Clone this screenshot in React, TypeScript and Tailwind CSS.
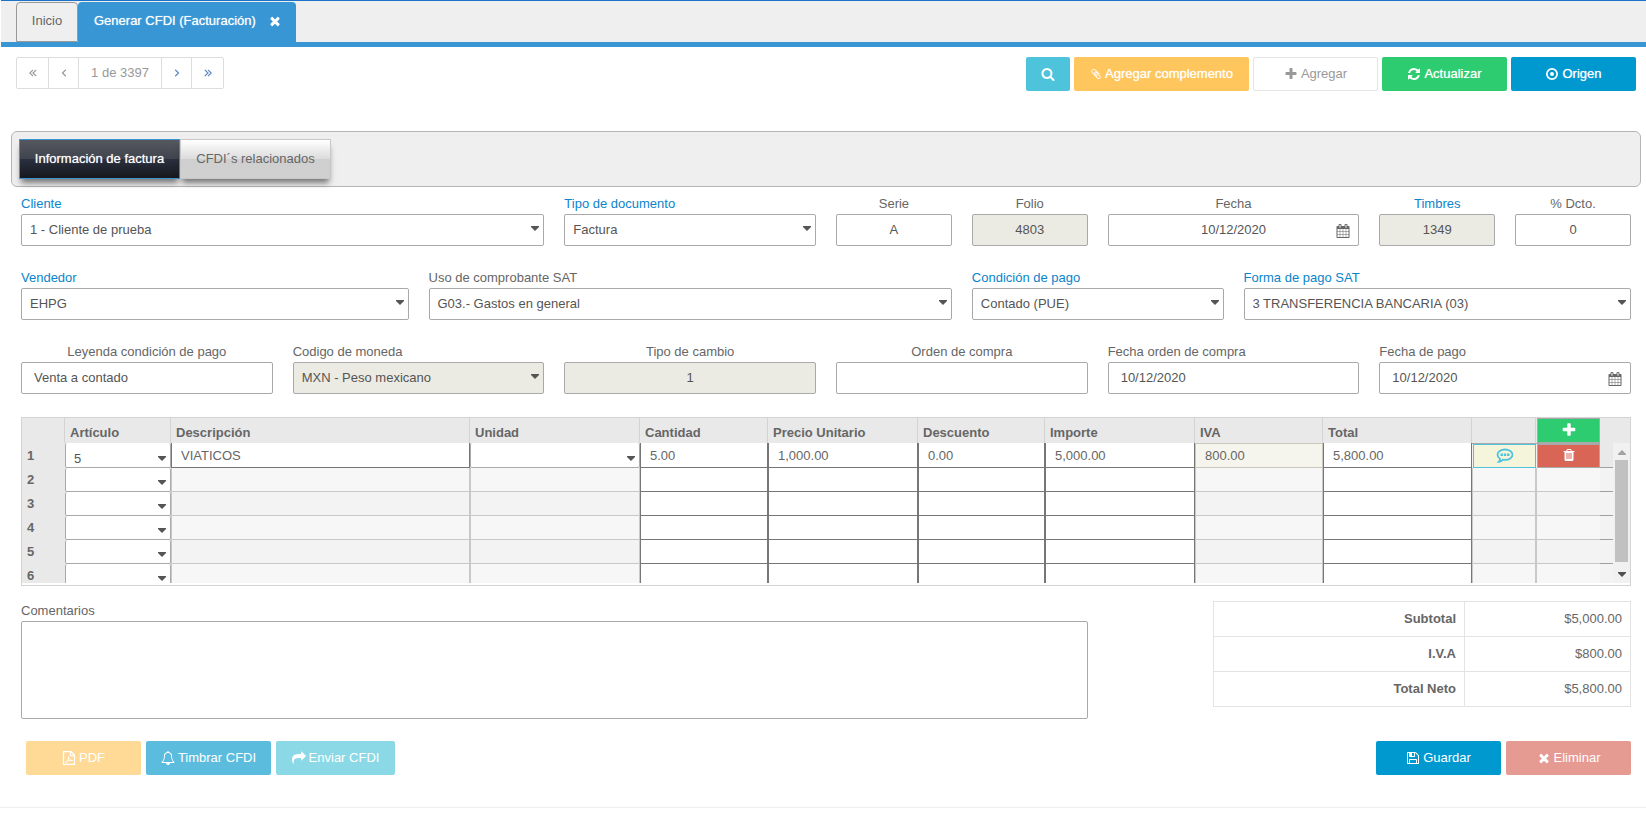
import React from "react"
import clsx from "clsx"

const icons = {
  times:
    "M1490 1322q0 40-28 68l-136 136q-28 28-68 28t-68-28l-294-294-294 294q-28 28-68 28t-68-28l-136-136q-28-28-28-68t28-68l294-294-294-294q-28-28-28-68t28-68l136-136q28-28 68-28t68 28l294 294 294-294q28-28 68-28t68 28l136 136q28 28 28 68t-28 68l-294 294 294 294q28 28 28 68z",
  search:
    "M1216 832q0-185-131.500-316.500t-316.500-131.500-316.500 131.500-131.500 316.500 131.500 316.500 316.500 131.500 316.500-131.500 131.500-316.500zm512 832q0 52-38 90t-90 38q-54 0-90-38l-343-342q-179 124-399 124-143 0-273.500-55.500t-225-150-150-225-55.500-273.500 55.500-273.500 150-225 225-150 273.500-55.500 273.500 55.500 225 150 150 225 55.500 273.500q0 220-124 399l343 343q37 37 37 90z",
  paperclip:
    "M1596 1385q0 117-79 196t-196 79q-135 0-235-100l-777-776q-113-115-113-271 0-159 110-270t269-111q158 0 273 113l605 606q10 10 10 22 0 16-30.500 46.500t-46.500 30.500q-13 0-23-10l-606-607q-79-77-181-77-106 0-179 75t-73 181q0 105 76 181l776 777q63 63 145 63 64 0 106-42t42-106q0-82-63-145l-581-581q-26-24-60-24-29 0-48 19t-19 48q0 32 25 59l410 410q10 10 10 22 0 16-31 47t-47 31q-12 0-22-10l-410-410q-63-61-63-149 0-82 57-139t139-57q88 0 149 63l581 581q100 98 100 235z",
  plus: "M1600 736v192q0 40-28 68t-68 28h-416v416q0 40-28 68t-68 28h-192q-40 0-68-28t-28-68v-416h-416q-40 0-68-28t-28-68v-192q0-40 28-68t68-28h416v-416q0-40 28-68t68-28h192q40 0 68 28t28 68v416h416q40 0 68 28t28 68z",
  refresh:
    "M1639 1056q0 5-1 7-64 268-268 434.500t-478 166.500q-146 0-282.500-55t-243.500-157l-129 129q-19 19-45 19t-45-19-19-45v-448q0-26 19-45t45-19h448q26 0 45 19t19 45-19 45l-137 137q71 66 161 102t187 36q134 0 250-65t186-179q11-17 53-117 8-23 30-23h192q13 0 22.500 9.500t9.500 22.500zm25-800v448q0 26-19 45t-45 19h-448q-26 0-45-19t-19-45 19-45l138-138q-148-137-349-137-134 0-250 65t-186 179q-11 17-53 117-8 23-30 23h-199q-13 0-22.500-9.500t-9.500-22.500v-7q65-268 270-434.500t480-166.500q146 0 284 55.500t245 156.500l130-129q19-19 45-19t45 19 19 45z",
  target:
    "M896 128a768 768 0 1 0 0 1536a768 768 0 1 0 0-1536zm0 224a544 544 0 1 1 0 1088a544 544 0 1 1 0-1088zm0 288a256 256 0 1 0 0 512a256 256 0 1 0 0-512z",
  calendar:
    "M192 1664h288v-288h-288v288zm352 0h320v-288h-320v288zm-352-352h288v-320h-288v320zm352 0h320v-320h-320v320zm-352-384h288v-288h-288v288zm736 736h320v-288h-320v288zm-384-736h320v-288h-320v288zm768 736h288v-288h-288v288zm-384-352h320v-320h-320v320zm-352-864v-288q0-13-9.500-22.500t-22.500-9.500h-64q-13 0-22.500 9.500t-9.500 22.500v288q0 13 9.500 22.500t22.500 9.500h64q13 0 22.500-9.500t9.500-22.500zm736 864h288v-320h-288v320zm-384-384h320v-288h-320v288zm384 0h288v-288h-288v288zm32-480v-288q0-13-9.500-22.500t-22.500-9.500h-64q-13 0-22.500 9.500t-9.500 22.500v288q0 13 9.500 22.500t22.500 9.500h64q13 0 22.500-9.500t9.500-22.500zm384-64v1280q0 52-38 90t-90 38h-1408q-52 0-90-38t-38-90v-1280q0-52 38-90t90-38h128v-96q0-66 47-113t113-47h64q66 0 113 47t47 113v96h384v-96q0-66 47-113t113-47h64q66 0 113 47t47 113v96h128q52 0 90 38t38 90z",
  trash:
    "M704 1376v-704q0-14-9-23t-23-9h-64q-14 0-23 9t-9 23v704q0 14 9 23t23 9h64q14 0 23-9t9-23zm256 0v-704q0-14-9-23t-23-9h-64q-14 0-23 9t-9 23v704q0 14 9 23t23 9h64q14 0 23-9t9-23zm256 0v-704q0-14-9-23t-23-9h-64q-14 0-23 9t-9 23v704q0 14 9 23t23 9h64q14 0 23-9t9-23zm-544-992h448l-48-117q-7-9-17-11h-317q-10 2-17 11zm928 32v64q0 14-9 23t-23 9h-96v948q0 83-47 143.500t-113 60.500h-832q-66 0-113-58.500t-47-141.500v-952h-96q-14 0-23-9t-9-23v-64q0-14 9-23t23-9h309l70-167q15-37 54-63t79-26h320q40 0 79 26t54 63l70 167h309q14 0 23 9t9 23z",
  save: "M512 1536h768v-384h-768v384zm896 0h128v-896q0-14-10-38.500t-20-34.500l-281-281q-10-10-34-20t-39-10v416q0 40-28 68t-68 28h-576q-40 0-68-28t-28-68v-416h-128v1280h128v-416q0-40 28-68t68-28h832q40 0 68 28t28 68v416zm-384-928v-320q0-13-9.500-22.500t-22.500-9.500h-192q-13 0-22.500 9.500t-9.500 22.500v320q0 13 9.500 22.500t22.500 9.500h192q13 0 22.500-9.500t9.500-22.500zm640 32v928q0 40-28 68t-68 28h-1344q-40 0-68-28t-28-68v-1344q0-40 28-68t68-28h928q40 0 88 20t76 48l280 280q28 28 48 76t20 88z",
  share:
    "M1792 640q0 26-19 45l-512 512q-19 19-45 19t-45-19-19-45v-256h-224q-98 0-175.500 6t-154 21.500-133 42.500-105.500 69.500-80 101-48.500 138.500-17.500 181q0 55 5 123 0 6 2.500 23.500t2.500 26.500q0 15-8.500 25t-23.500 10q-16 0-28-17-7-9-13-22t-13.500-30-10.500-24q-127-285-127-451 0-199 53-333 162-403 875-403h224v-256q0-26 19-45t45-19 45 19l512 512q19 19 19 45z",
  bell: "M912 1696q0-16-16-16-59 0-101.500-42.500t-42.500-101.500q0-16-16-16t-16 16q0 73 51.500 124.500t124.500 51.500q16 0 16-16zm-666-288h1300q-266-300-266-832 0-51-24-105t-69-103-121.500-80.500-169.500-31.500-169.500 31.500-121.500 80.500-69 103-24 105q0 532-266 832zm1482 0q0 52-38 90t-90 38h-448q0 106-75 181t-181 75-181-75-75-181h-448q-52 0-90-38t-38-90q50-42 91-88t85-119.500 74.500-158.500 50-206 19.500-260q0-152 117-282.500t307-158.500q-8-19-8-39 0-40 28-68t68-28 68 28 28 68q0 20-8 39 190 28 307 158.500t117 282.500q0 139 19.500 260t50 206 74.500 158.500 85 119.500 91 88z",
}

interface IconProps {
  name: keyof typeof icons
  className?: string
}

function Icon({ name, className = "size-[14px]" }: IconProps) {
  return (
    <svg viewBox="0 0 1792 1792" className={clsx("shrink-0", className)} fill="currentColor" fillRule={name === "target" ? "evenodd" : "nonzero"} aria-hidden="true">
      <path d={icons[name]} />
    </svg>
  )
}

function PdfIcon() {
  return (
    <svg viewBox="0 0 14 14" className="size-[14px] shrink-0" fill="none" stroke="currentColor" strokeWidth="1.300" aria-hidden="true">
      <path d="M1.500.6h7.500l3.500 3.500v9.300h-11z M8.500.6v4h4" />
      <path d="M3.500 11.500c1.500-.5 3.500-4 3.200-6.200c-.8 1.500 1.300 4.200 3.800 4.200c-1.500-.8-4 .2-7 2z" strokeWidth="1" />
    </svg>
  )
}

function CommentIcon() {
  return (
    <svg viewBox="0 0 18 16" className="h-4 w-[18px]" fill="none" stroke="currentColor" aria-hidden="true">
      <path d="M9 1.500c4.200 0 7.500 2.200 7.500 5.200s-3.300 5.200-7.500 5.200q-1 0-2-.2q-1.800 1.900-4.200 2.100q1.100-1.200 1.200-3.100q-2.500-1.500-2.500-4c0-3 3.300-5.200 7.500-5.200z" strokeWidth="1.800" />
      <path d="M4.500 6.700h2.400M7.800 6.700h2.400M11.100 6.700h2.400" strokeWidth="2.400" />
    </svg>
  )
}

function Chevron({ left, double }: { left?: boolean; double?: boolean }) {
  return (
    <svg viewBox="0 0 8 8" className={clsx("size-2", left && "rotate-180")} fill="none" stroke="currentColor" strokeWidth="1.200" aria-hidden="true">
      {double ? <path d="M.8.8L4 4L.8 7.200M4 .8L7.200 4L4 7.200" /> : <path d="M2.200.8L5.500 4L2.200 7.200" />}
    </svg>
  )
}

function Caret({ className, up }: { className?: string; up?: boolean }) {
  return (
    <svg viewBox="0 0 8 5" className={clsx("h-[5px] w-2", up && "rotate-180", className)} fill="currentColor" aria-hidden="true">
      <path d="M0 0h8v1L4 5L0 1z" />
    </svg>
  )
}

interface FieldProps {
  id: string
  label: string
  value?: string
  span: string
  type?: "select" | "date" | "text"
  blue?: boolean
  centerLabel?: boolean
  center?: boolean
  disabled?: boolean
}

function Field({ id, label, value = "", span, type = "text", blue, centerLabel, center, disabled }: FieldProps) {
  const box = clsx("h-8 w-full rounded-xs border border-[#a9a9a9] text-[#555]", disabled ? "bg-[#ebebe4]" : "bg-white")
  return (
    <div className={span}>
      <label htmlFor={id} className={clsx("block h-5 leading-5", blue && "text-[#0a84cb]", centerLabel && "text-center")}>
        {label}
      </label>
      <div className="relative">
        {type === "select" ? (
          <>
            <select id={id} disabled={disabled} className={clsx(box, "appearance-none pr-6 pl-2 opacity-100")}>
              <option>{value}</option>
            </select>
            <Caret className="pointer-events-none absolute top-3 right-[5px] text-[#555]" />
          </>
        ) : (
          <input id={id} type="text" defaultValue={value} disabled={disabled} className={clsx(box, "px-3 pb-0.5", center && "text-center")} />
        )}
        {type === "date" && <Icon name="calendar" className="pointer-events-none absolute top-[10px] right-[9px] size-[14px]" />}
      </div>
    </div>
  )
}

interface ButtonProps {
  children: React.ReactNode
  className: string
}

function Button({ children, className }: ButtonProps) {
  return (
    <button type="button" className={clsx("flex h-[34px] items-center justify-center gap-[3px] rounded-xs", className)}>
      {children}
    </button>
  )
}

const columns = [
  { name: "", width: "w-[43px]" },
  { name: "Artículo", width: "w-[106px]" },
  { name: "Descripción", width: "" },
  { name: "Unidad", width: "w-[170px]" },
  { name: "Cantidad", width: "w-[128px]" },
  { name: "Precio Unitario", width: "w-[150px]" },
  { name: "Descuento", width: "w-[127px]" },
  { name: "Importe", width: "w-[150px]" },
  { name: "IVA", width: "w-[128px]" },
  { name: "Total", width: "w-[149px]" },
]

const rows = [
  { articulo: "5", descripcion: "VIATICOS", cantidad: "5.00", precio: "1,000.00", descuento: "0.00", importe: "5,000.00", iva: "800.00", total: "5,800.00" },
  {},
  {},
  {},
  {},
  {},
] as Record<string, string>[]

function CellSelect({ label, value, row }: { label: string; value?: string; row: number }) {
  return (
    <td className="p-0">
      <div className="relative">
        <select
          aria-label={`${label} ${row}`}
          className={clsx("block w-full appearance-none rounded-xs border border-t-0 border-[#a9a9a9] bg-white pt-1.5 pl-2 text-[#555]", row === 1 ? "h-[25px] border-t" : "h-6")}
        >
          <option>{value}</option>
        </select>
        <Caret className="pointer-events-none absolute right-[5px] bottom-[7px] text-[#555]" />
      </div>
    </td>
  )
}

function CellInput({ label, value, row }: { label: string; value?: string; row: number }) {
  return (
    <td className="p-0">
      <input
        type="text"
        aria-label={`${label} ${row}`}
        defaultValue={value}
        className={clsx("block w-full border border-t-0 border-[#767676] bg-white px-[9px] text-[#666]", row === 1 ? "h-[25px] border-t" : "h-6")}
      />
    </td>
  )
}

function EmptyCell({ className }: { className?: string }) {
  return <td className={clsx("border border-t-0 border-[#c8c8c8] p-0", className)} />
}

function ItemRow({ item, index }: { item: Record<string, string>; index: number }) {
  const row = index + 1
  const filled = index === 0
  return (
    <tr className={clsx(filled ? "h-[25px]" : "h-6", index % 2 ? "bg-[#f7f7f7]" : "bg-[#f3f3f3]")}>
      <th scope="row" className="bg-[#e9e9e9] p-0 pl-[5px] text-left">
        {row}
      </th>
      <CellSelect label="Artículo" value={item.articulo} row={row} />
      {filled ? <CellInput label="Descripción" value={item.descripcion} row={row} /> : <EmptyCell />}
      {filled ? <CellSelect label="Unidad" row={row} /> : <EmptyCell />}
      <CellInput label="Cantidad" value={item.cantidad} row={row} />
      <CellInput label="Precio Unitario" value={item.precio} row={row} />
      <CellInput label="Descuento" value={item.descuento} row={row} />
      <CellInput label="Importe" value={item.importe} row={row} />
      {filled ? <td className="border border-[#c8c8bc] bg-[#f5f5ed] p-0 pl-[9px]">{item.iva}</td> : <EmptyCell />}
      <CellInput label="Total" value={item.total} row={row} />
      {filled ? (
        <>
          <td className="border-t border-[#a9a9a9] p-0 pl-px">
            <button type="button" aria-label="Comentario" className="flex h-6 w-full items-center justify-center border border-[#4ec3dc] bg-[#f5f5dc] pb-px text-[#4ec3dc]">
              <CommentIcon />
            </button>
          </td>
          <td className="border-t border-[#a9a9a9] p-0 pl-px">
            <button type="button" aria-label="Borrar renglón" className="flex h-6 w-full items-center justify-center border border-[#a9a9a9] bg-[#d96557] pb-0.5 text-white">
              <Icon name="trash" />
            </button>
          </td>
          <td className="border-b border-[#a0a0a0] bg-[#e9e9e9] p-0" />
        </>
      ) : (
        <>
          <EmptyCell />
          <EmptyCell className="border-r-0" />
          <td className="border-b border-[#a0a0a0] bg-[#f3f3f3] p-0" />
        </>
      )}
    </tr>
  )
}

function Items() {
  return (
    <div className="mt-[23px] border border-[#d3d3d3] pb-0.5">
      <div className="flex h-[165px] overflow-hidden">
        <table className="w-full table-fixed border-separate border-spacing-0 self-start">
          <thead>
            <tr className="h-[25px] bg-[#e9e9e9]">
              {columns.map(({ name, width }) => (
                <th key={name} scope="col" className={clsx("border-r border-[#d3d3d3] p-0 pt-1 pl-[5px] text-left leading-5", width)}>
                  {name}
                </th>
              ))}
              <th className="w-16 border-r border-[#d3d3d3] p-0" />
              <th className="w-16 p-0 pl-px">
                <button type="button" aria-label="Agregar renglón" className="flex h-[25px] w-full items-center justify-center border border-[#a9a9a9] bg-[#2ecc71] pb-0.5 text-white">
                  <Icon name="plus" className="size-4" />
                </button>
              </th>
              <th className="w-[13px] p-0" />
            </tr>
          </thead>
          <tbody>
            {rows.map((item, i) => (
              <ItemRow key={i} item={item} index={i} />
            ))}
          </tbody>
        </table>
        <div className="flex w-[17px] shrink-0 flex-col">
          <div className="h-[25px] bg-[#e9e9e9]" />
          <div className="flex flex-1 flex-col items-center bg-[#f1f1f1]">
            <Caret up className="mt-[7px] text-[#a3a3a3]" />
            <div className="mt-[5px] h-[102px] w-[13px] bg-[#c1c1c1]" />
            <Caret className="mt-[10px] text-[#505050]" />
          </div>
        </div>
      </div>
    </div>
  )
}

const totals = [
  ["Subtotal", "$5,000.00"],
  ["I.V.A", "$800.00"],
  ["Total Neto", "$5,800.00"],
]

// thickens light text on the coloured buttons
const solid = "text-white [text-shadow:0_0_1px_rgba(255,255,255,0.7)]"

function App() {
  return (
    <div className="bg-white font-['Liberation_Sans',Arial,sans-serif] text-[13px] text-[#666]">
      <nav className="ml-px flex h-[47px] items-end border-t border-b-5 border-t-[#1a73c8] border-b-[#3896d4] bg-[#efefef] pl-[15px]">
        <a href="#inicio" className="flex h-10 w-[62px] items-center justify-center rounded-t border border-[#999] pb-0.5">
          Inicio
        </a>
        <a href="#cfdi" className={clsx("flex h-10 items-center gap-3 rounded-t bg-[#3896d4] pr-[14px] pb-0.5 pl-4", solid)}>
          <span className="w-[162px]">Generar CFDI (Facturación)</span>
          <Icon name="times" />
        </a>
      </nav>

      <header className="flex justify-between px-[10px] pt-[10px] pl-4">
        <div className="flex h-8 divide-x divide-[#ddd] rounded-xs border border-[#ddd] text-[#999]">
          <button type="button" aria-label="Primero" className="flex w-8 items-center justify-center">
            <Chevron left double />
          </button>
          <button type="button" aria-label="Anterior" className="flex w-[30px] items-center justify-center">
            <Chevron left />
          </button>
          <span className="flex w-[83px] items-center justify-center">1 de 3397</span>
          <button type="button" aria-label="Siguiente" className="flex w-[30px] items-center justify-center text-[#5f88c4]">
            <Chevron />
          </button>
          <button type="button" aria-label="Último" className="flex w-[31px] items-center justify-center text-[#5f88c4]">
            <Chevron double />
          </button>
        </div>
        <div className="flex gap-1">
          <button type="button" aria-label="Buscar" className="flex h-[34px] w-11 items-center justify-center rounded-xs bg-[#4ec3dc] text-white">
            <Icon name="search" />
          </button>
          <Button className={clsx("w-[175px] bg-[#ffc65d]", solid)}>
            <Icon name="paperclip" className="size-3" /> Agregar complemento
          </Button>
          <Button className="w-[125px] border border-[#e5e5e5] bg-white text-[#999]">
            <Icon name="plus" /> Agregar
          </Button>
          <Button className={clsx("w-[125px] bg-[#2ecc71]", solid)}>
            <Icon name="refresh" /> Actualizar
          </Button>
          <Button className={clsx("w-[125px] bg-[#0099cf]", solid)}>
            <Icon name="target" /> Origen
          </Button>
        </div>
      </header>

      <div className="mx-[11px] mt-10 mr-[5px] flex h-14 rounded-md border border-[#b5b5b5] bg-[#efefef] p-[7px]">
        <button
          type="button"
          className={clsx(
            "h-10 w-[161px] border border-[#3896d4] bg-linear-[180deg,#56585e_0%,#40444e_49%,#2a3040_50%,#16181c_100%] shadow-[0_6px_6px_-2px_rgba(0,0,0,0.5)]",
            solid
          )}
        >
          Información de factura
        </button>
        <button
          type="button"
          className="h-10 w-[151px] border border-[#c8c8c8] bg-linear-[180deg,#fff_0%,#dcdcdc_49%,#cfcfcf_50%,#d0d0d0_100%] shadow-[0_6px_6px_-2px_rgba(0,0,0,0.5)]"
        >
          CFDI´s relacionados
        </button>
      </div>

      <form className="pt-[7px] pr-[15px] pl-[21px]">
        <div className="grid grid-cols-12 gap-x-5 gap-y-[22px]">
          <Field id="cliente" label="Cliente" value="1 - Cliente de prueba" span="col-span-4" type="select" blue />
          <Field id="tipo" label="Tipo de documento" value="Factura" span="col-span-2" type="select" blue />
          <Field id="serie" label="Serie" value="A" span="col-span-1" centerLabel center />
          <Field id="folio" label="Folio" value="4803" span="col-span-1" centerLabel center disabled />
          <Field id="fecha" label="Fecha" value="10/12/2020" span="col-span-2" type="date" centerLabel center />
          <Field id="timbres" label="Timbres" value="1349" span="col-span-1" blue centerLabel center disabled />
          <Field id="dcto" label="% Dcto." value="0" span="col-span-1" centerLabel center />

          <Field id="vendedor" label="Vendedor" value="EHPG" span="col-span-3" type="select" blue />
          <Field id="uso" label="Uso de comprobante SAT" value="G03.- Gastos en general" span="col-span-4" type="select" />
          <Field id="condicion" label="Condición de pago" value="Contado (PUE)" span="col-span-2" type="select" blue />
          <Field id="forma" label="Forma de pago SAT" value="3 TRANSFERENCIA BANCARIA (03)" span="col-span-3" type="select" blue />

          <Field id="leyenda" label="Leyenda condición de pago" value="Venta a contado" span="col-span-2" centerLabel />
          <Field id="moneda" label="Codigo de moneda" value="MXN - Peso mexicano" span="col-span-2" type="select" disabled />
          <Field id="cambio" label="Tipo de cambio" value="1" span="col-span-2" centerLabel center disabled />
          <Field id="orden" label="Orden de compra" span="col-span-2" centerLabel />
          <Field id="fecha-orden" label="Fecha orden de compra" value="10/12/2020" span="col-span-2" />
          <Field id="fecha-pago" label="Fecha de pago" value="10/12/2020" span="col-span-2" type="date" />
        </div>

        <Items />

        <div className="mt-[15px] grid grid-cols-12 gap-x-5">
          <div className="col-span-8">
            <label htmlFor="comentarios" className="block h-5 leading-5">
              Comentarios
            </label>
            <textarea id="comentarios" className="block h-[98px] w-full resize-none rounded-xs border border-[#a9a9a9] p-2" />
          </div>
          <div className="col-span-4 flex justify-end">
            <table className="w-[418px] border-collapse self-start text-right">
              <tbody>
                {totals.map(([name, amount]) => (
                  <tr key={name} className="h-[35px]">
                    <th scope="row" className="border border-[#e3e3e3] px-2 py-0">
                      {name}
                    </th>
                    <td className="w-[166px] border border-[#e3e3e3] px-2 py-0">{amount}</td>
                  </tr>
                ))}
              </tbody>
            </table>
          </div>
        </div>

        <div className="mt-[22px] flex justify-between pl-[5px]">
          <div className={clsx("flex gap-[5px]", solid)}>
            <Button className="w-[115px] bg-[#ffd996]">
              <PdfIcon /> PDF
            </Button>
            <Button className="w-[125px] bg-[#5bbcde]">
              <Icon name="bell" /> Timbrar CFDI
            </Button>
            <Button className="w-[119px] bg-[#8bd9e6]">
              <Icon name="share" /> Enviar CFDI
            </Button>
          </div>
          <div className={clsx("flex gap-[5px]", solid)}>
            <Button className="w-[125px] bg-[#0099cf]">
              <Icon name="save" /> Guardar
            </Button>
            <Button className="w-[125px] bg-[#e59a92]">
              <Icon name="times" /> Eliminar
            </Button>
          </div>
        </div>
      </form>
      <footer className="mt-8 h-[7px] border-t border-[#eee]" />
    </div>
  )
}

export default App
